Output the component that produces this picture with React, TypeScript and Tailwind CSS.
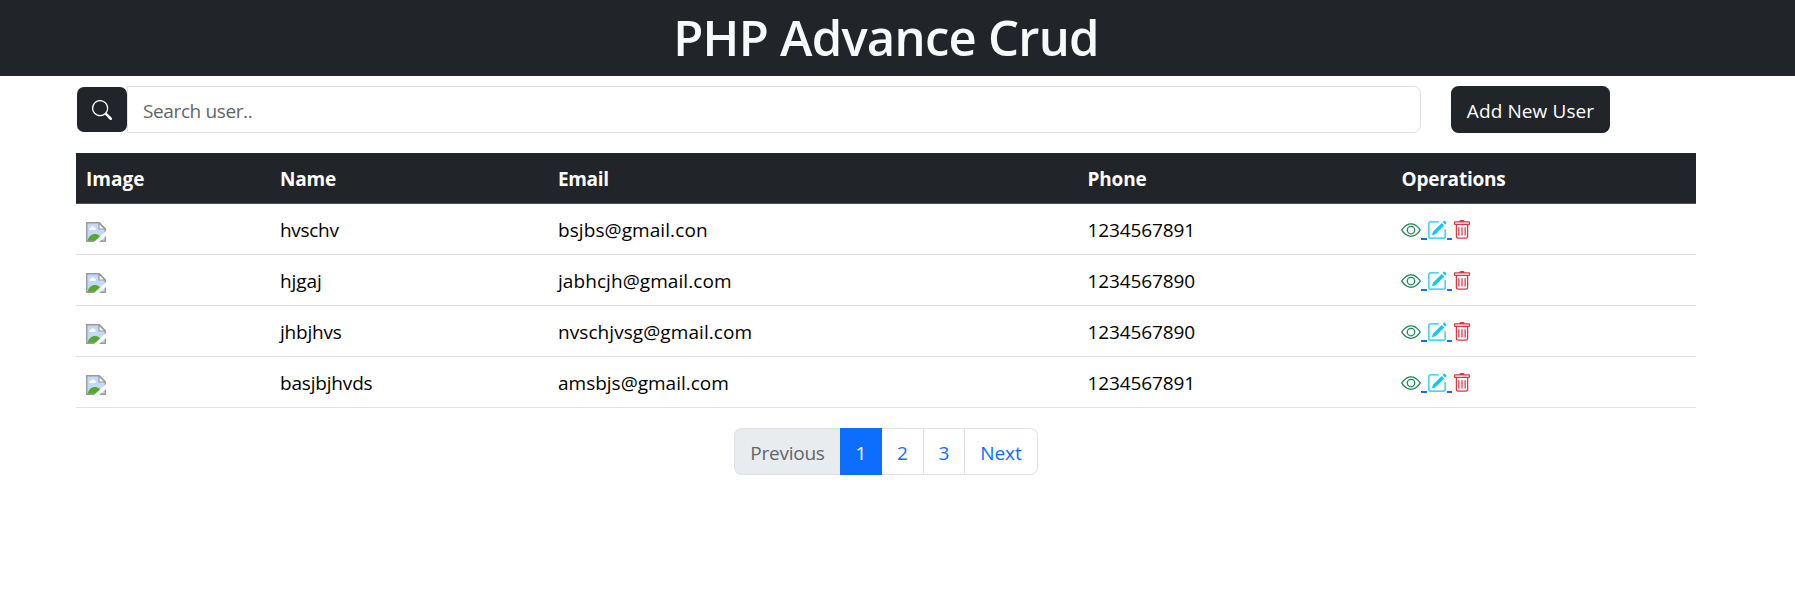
import { BsEye, BsPencilSquare, BsSearch, BsTrash } from "react-icons/bs";

type User = { name: string; nameFit: string; email: string; emailFit: string; phone: string };

const users: User[] = [
  { name: "hvschv", nameFit: "tracking-[-0.3px]", email: "bsjbs@gmail.con", emailFit: "tracking-[0.08px]", phone: "1234567891" },
  { name: "hjgaj", nameFit: "tracking-[-0.05px]", email: "jabhcjh@gmail.com", emailFit: "tracking-[0.07px]", phone: "1234567890" },
  { name: "jhbjhvs", nameFit: "tracking-[-0.2px]", email: "nvschjvsg@gmail.com", emailFit: "tracking-[0.07px]", phone: "1234567890" },
  { name: "basjbjhvds", nameFit: "tracking-[-0.18px]", email: "amsbjs@gmail.com", emailFit: "tracking-[0px]", phone: "1234567891" },
];

function MissingImage() {
  return (
    <svg viewBox="0 0 20 20" className="mt-[18px] block size-5">
      <path d="M1 1H13L19 7V19H1Z" fill="#c4d8f7" />
      <path d="M3.500 7.500a1.6 1.6 0 0 1 1.500-2 2 2 0 0 1 3.600 0 1.300 1.300 0 0 1 .4 2.500H4.500A1.200 1.200 0 0 1 3.500 7.500Z" fill="#fff" />
      <path d="M1.500 19C2.500 14.500 5.500 12 9 12s6 2.500 7 7Z" fill="#54a92f" />
      <path d="M.7 .7H13.300L19.300 6.700V19.300H.7Z" fill="none" stroke="#9b9b9b" strokeWidth="1.4" />
      <path d="M13 1V7H19Z" fill="#fff" stroke="#9b9b9b" strokeWidth="1.2" />
      <path d="M20 9V14L12.500 20.500H7.500Z" fill="#fff" />
    </svg>
  );
}

function Operations() {
  return (
    <div className="-ml-[0.5px] flex h-5">
      <BsEye className="size-5 text-[#198754]" />
      <span className="mt-[18px] h-0.5 w-[5.500px] bg-[#0d6efd]" />
      <BsPencilSquare className="size-5 text-[#0dcaf0]" />
      <span className="mt-[18px] h-0.5 w-[5.500px] bg-[#0d6efd]" />
      <BsTrash className="size-5 text-[#dc3545]" />
    </div>
  );
}

const row = "grid h-[51px] grid-cols-[194px_278px_529.5px_314px_304.5px] border-b *:pl-2.5";

export default function App() {
  return (
    <div className="h-[596px] overflow-hidden bg-white font-['Open_Sans','Noto_Sans',sans-serif] text-[19px] leading-[30px] text-black">
      <header className="flex h-[76px] justify-center bg-[#212529] pr-[23px]">
        <h1 className="mt-[7px] text-[49px] leading-[60px] font-semibold tracking-[-0.75px] whitespace-nowrap text-[#f8f9fa]">PHP Advance Crud</h1>
      </header>
      <main className="ml-[76px] w-[1620px]">
        <div className="flex pt-2.5">
          <div className="flex h-[47px] w-[1345px] items-stretch">
            <span className="my-px ml-px flex w-[50px] items-center justify-center rounded-[7px] bg-[#212529] text-white">
              <BsSearch className="size-5" />
            </span>
            <input
              placeholder="Search user.."
              className="min-w-0 flex-1 rounded-r-[7.500px] border border-[#dee2e6] pt-0.5 pl-[15px] tracking-[-0.38px] outline-none placeholder:text-[#616569]"
            />
          </div>
          <button className="ml-[30px] h-[47px] w-[159px] rounded-[7.500px] bg-[#212529] pt-0.5 tracking-[0.1px] text-white">Add New User</button>
        </div>
        <section className="mt-5">
          <div className={`${row} items-center border-[#4d5154] bg-[#212529] pt-0.5 font-bold text-white`}>
            <span>Image</span>
            <span className="tracking-[-0.2px]">Name</span>
            <span className="tracking-[-0.35px]">Email</span>
            <span className="tracking-[-0.15px]">Phone</span>
            <span className="tracking-[-0.22px]">Operations</span>
          </div>
          {users.map((user) => (
            <div key={user.name} className={`${row} border-[#dee2e6]`}>
              <div><MissingImage /></div>
              <div className="pt-[11px]"><span className={user.nameFit}>{user.name}</span></div>
              <div className="pt-[11px]"><span className={user.emailFit}>{user.email}</span></div>
              <div className="pt-[11px] tracking-[-0.1px]">{user.phone}</div>
              <div className="pt-4"><Operations /></div>
            </div>
          ))}
        </section>
        <nav className="mt-5 ml-[658px] flex h-[47px] w-[304px] *:flex *:items-center *:justify-center *:border-y *:border-[#dee2e6] *:pt-0.5">
          <span className="w-[106px] rounded-l-[7.500px] border-l bg-[#e9ecef] tracking-[-0.25px] text-[#616569]">Previous</span>
          <a className="w-[42px] !border-[#0d6efd] bg-[#0d6efd] text-white">1</a>
          <a className="w-[42px] border-r text-[#0d6efd]">2</a>
          <a className="w-[41px] border-r text-[#0d6efd]">3</a>
          <a className="w-[73px] rounded-r-[7.500px] border-r text-[#0d6efd]">Next</a>
        </nav>
      </main>
    </div>
  );
}
